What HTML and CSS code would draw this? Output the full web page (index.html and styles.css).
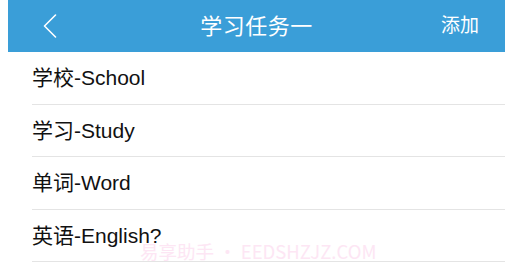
FILE: index.html
```html
<!DOCTYPE html>
<html lang="zh">
<head>
<meta charset="utf-8">
<title>学习任务一</title>
<link rel="stylesheet" href="styles.css">
</head>
<body>
<div class="page">
  <header class="navbar">
    <span class="back" aria-label="返回">
      <svg width="14" height="24" viewBox="0 0 14 24"><path d="M12.5 1 L1.5 12 L12.5 23" fill="none" stroke="#fff" stroke-width="1.6" stroke-linecap="round" stroke-linejoin="round"/></svg>
    </span>
    <h1 class="title">学习任务一</h1>
    <span class="action">添加</span>
  </header>
  <ul class="list">
    <li class="item">学校-School</li>
    <li class="item">学习-Study</li>
    <li class="item">单词-Word</li>
    <li class="item">英语-English?</li>
  </ul>
  <div class="watermark">易享助手 • EEDSHZJZ.COM</div>
</div>
</body>
</html>
```
FILE: styles.css
```css
html, body {
  margin: 0;
  padding: 0;
  background: #fff;
}
.page {
  position: relative;
  margin-left: 8px;
  width: 497px;
  font-family: "Liberation Sans", "Noto Sans CJK SC", sans-serif;
}
.navbar {
  height: 52px;
  box-sizing: border-box;
  padding-bottom: 5px;
  background: #3a9ed8;
  display: grid;
  grid-template-columns: 1fr auto 1fr;
  align-items: center;
  color: #fff;
  line-height: 1;
}
.back {
  display: flex;
  align-items: center;
  padding-left: 35px;
  padding-top: 4px;
}
.back svg {
  display: block;
}
.title {
  margin: 0;
  font-weight: normal;
  font-size: 22px;
  letter-spacing: 0.5px;
  font-family: "Noto Sans CJK SC", sans-serif;
}
.action {
  justify-self: end;
  padding-right: 26px;
  font-size: 19px;
  font-family: "Noto Sans CJK SC", sans-serif;
}
.list {
  list-style: none;
  margin: 0;
  padding: 0 0 0 24px;
}
.item {
  height: 51.5px;
  display: flex;
  align-items: center;
  border-bottom: 1px solid #e4e4e4;
  font-size: 21px;
  line-height: 1;
  color: #111;
}
.watermark {
  position: absolute;
  left: 132px;
  top: 238px;
  font-size: 18.5px;
  color: #fde6f4;
  font-family: "Noto Sans CJK SC", sans-serif;
  white-space: nowrap;
}
```
